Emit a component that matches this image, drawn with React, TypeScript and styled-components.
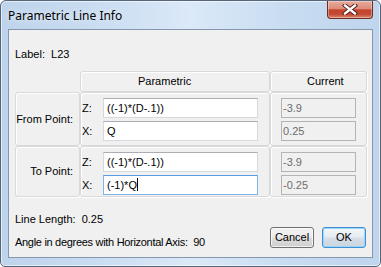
import React from 'react'
import styled, { createGlobalStyle } from 'styled-components'

const GlobalStyle = createGlobalStyle`
  html, body {
    margin:0;
    padding:0;
    background:#fff;
  }
  body {
    width:381px;
    height:267px;
    overflow:hidden;
    font:normal 11px/13px "Liberation Sans", Arial, sans-serif;
    color:#000;
  }
`

const Window = styled.div`
  box-sizing:border-box;
  width:381px;
  height:267px;
  border:1px solid #55657a;
  border-radius:6px 6px 5px 5px;
  background:linear-gradient(90deg, #bed4ec 0%, #c9dcf1 25%, #dbe9f8 50%, #c8dcf1 75%, #bfd5ee 100%);
  box-shadow:inset 0 0 0 1px rgba(255,255,255,.6);
  display:flex;
  flex-direction:column;
  padding:0 7px 8px 7px;
`

const TitleBar = styled.div`
  height:28px;
  display:flex;
  justify-content:space-between;
  align-items:flex-start;
`

const Title = styled.div`
  padding-top:7px;
  font:normal 12px/16px "Noto Sans", "Open Sans", sans-serif;
  color:#000;
  text-shadow:0 0 6px rgba(255,255,255,.9);
`

const CloseButton = styled.div`
  box-sizing:border-box;
  width:46px;
  height:18px;
  border:1px solid #6e2b20;
  border-top:none;
  border-radius:0 0 4px 4px;
  background:linear-gradient(180deg, #e8ab9c 0%, #dd8c7a 45%, #c4452e 52%, #c24a34 78%, #d9866c 100%);
  box-shadow:inset 0 0 0 1px rgba(255,255,255,.35);
  display:flex;
  align-items:center;
  justify-content:center;
`

const Client = styled.div`
  flex:1;
  border:1px solid #8597ad;
  background:#f0f0f0;
  padding:18px 6px 0 6px;
  display:flex;
  flex-direction:column;
`

const Line = styled.div<{ $tight?: boolean }>`
  height:13px;
  line-height:13px;
  white-space:pre;
  letter-spacing:${p => p.$tight ? '-0.3px' : 'normal'};
`

const Table = styled.div`
  margin-top:10px;
  display:grid;
  grid-template-columns:65px 190px 97px;
  grid-template-rows:21px 54px 51px;
`

const Cell = styled.div`
  box-sizing:border-box;
  border:1px solid #d9d9d9;
  border-radius:3px;
  box-shadow:inset 1px 1px 0 #fff, 1px 1px 0 #fff;
`

const HeaderCell = styled(Cell)<{ $indent: number }>`
  display:flex;
  align-items:center;
  padding-left:${p => p.$indent}px;
`

const PointCell = styled(Cell)`
  display:flex;
  align-items:center;
  justify-content:flex-end;
  padding-right:6px;
  white-space:nowrap;
`

const FieldCell = styled(Cell)<{ $left: number }>`
  display:flex;
  flex-direction:column;
  gap:3px;
  padding:5px 0 0 ${p => p.$left}px;
`

const FieldRow = styled.div`
  display:flex;
  align-items:center;
`

const Axis = styled.span`
  width:21px;
`

const Field = styled.div<{ $width: number; $focused?: boolean }>`
  box-sizing:border-box;
  width:${p => p.$width}px;
  height:20px;
  padding-left:3px;
  line-height:18px;
  background:#fff;
  border:1px solid ${p => p.$focused ? '#7eb4ea' : '#d5d8dc'};
  border-top-color:${p => p.$focused ? '#569de5' : '#abadb3'};
  white-space:pre;
`

const ReadOnlyField = styled(Field)`
  padding-left:1px;
  background:#f0f0f0;
  color:#6d6d6d;
  border:1px solid #b4b4b4;
`

const Caret = styled.span`
  display:inline-block;
  width:1px;
  height:13px;
  background:#000;
  vertical-align:-2px;
`

const Footer = styled.div`
  margin-top:16px;
  display:flex;
  justify-content:space-between;
  align-items:flex-end;
`

const Info = styled.div`
  display:flex;
  flex-direction:column;
  gap:10px;
`

const Buttons = styled.div`
  display:flex;
  gap:8px;
  margin-bottom:1px;
`

const Button = styled.div<{ $default?: boolean }>`
  box-sizing:border-box;
  width:44px;
  height:21px;
  border:1px solid ${p => p.$default ? '#3c8ed6' : '#707070'};
  border-radius:3px;
  background:${p => p.$default
    ? 'linear-gradient(180deg, #f2f6f9 0%, #e6ecf1 48%, #d6dee6 52%, #cbd5de 100%)'
    : 'linear-gradient(180deg, #f2f2f2 0%, #ebebeb 48%, #dddddd 52%, #cfcfcf 100%)'};
  box-shadow:inset 0 0 0 1px ${p => p.$default ? '#9cd6f7' : 'rgba(255,255,255,.7)'};
  display:flex;
  align-items:center;
  justify-content:center;
  font-size:11px;
`

const CloseGlyph: React.FC = () => (
  <svg width="16" height="11" viewBox="0 0 16 11">
    <path d="M3 1.5 L13 9.5 M13 1.5 L3 9.5" stroke="#4a1a12" strokeWidth="4.2" strokeLinecap="square" />
    <path d="M3 1.5 L13 9.5 M13 1.5 L3 9.5" stroke="#ffffff" strokeWidth="2.4" strokeLinecap="square" />
  </svg>
)

type Point = { name: string; z: string; x: string; cz: string; cx: string; focused?: boolean }

const points: Point[] = [
  { name: 'From Point:', z: '((-1)*(D-.1))', x: 'Q', cz: '-3.9', cx: '0.25' },
  { name: 'To Point:', z: '((-1)*(D-.1))', x: '(-1)*Q', cz: '-3.9', cx: '-0.25', focused: true },
]

const App: React.FC = () => {
  return (
    <>
      <GlobalStyle />
      <Window>
        <TitleBar>
          <Title>Parametric Line Info</Title>
          <CloseButton><CloseGlyph /></CloseButton>
        </TitleBar>
        <Client>
          <Line>Label:  L23</Line>
          <Table>
            <div />
            <HeaderCell $indent={57}>Parametric</HeaderCell>
            <HeaderCell $indent={36}>Current</HeaderCell>
            {points.map(p => (
              <React.Fragment key={p.name}>
                <PointCell>{p.name}</PointCell>
                <FieldCell $left={1}>
                  <FieldRow>
                    <Axis>Z:</Axis>
                    <Field $width={155}>{p.z}</Field>
                  </FieldRow>
                  <FieldRow>
                    <Axis>X:</Axis>
                    <Field $width={155} $focused={p.focused}>{p.x}{p.focused && <Caret />}</Field>
                  </FieldRow>
                </FieldCell>
                <FieldCell $left={10}>
                  <ReadOnlyField $width={75}>{p.cz}</ReadOnlyField>
                  <ReadOnlyField $width={75}>{p.cx}</ReadOnlyField>
                </FieldCell>
              </React.Fragment>
            ))}
          </Table>
          <Footer>
            <Info>
              <Line>Line Length:  0.25</Line>
              <Line $tight>Angle in degrees with Horizontal Axis:  90</Line>
            </Info>
            <Buttons>
              <Button>Cancel</Button>
              <Button $default>OK</Button>
            </Buttons>
          </Footer>
        </Client>
      </Window>
    </>
  )
}

export default App
